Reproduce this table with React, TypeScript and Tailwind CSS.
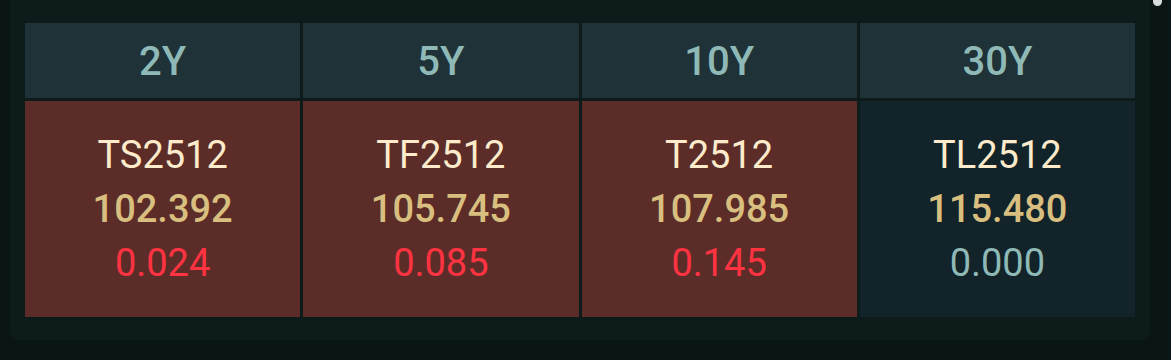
const TENORS = ["2Y", "5Y", "10Y", "30Y"];

type Quote = {
  symbol: string;
  price: string;
  change: number;
};

const QUOTES: Quote[] = [
  { symbol: "TS2512", price: "102.392", change: 0.024 },
  { symbol: "TF2512", price: "105.745", change: 0.085 },
  { symbol: "T2512", price: "107.985", change: 0.145 },
  { symbol: "TL2512", price: "115.480", change: 0.0 },
];

export default function App() {
  return (
    <div
      className="relative h-[360px] w-full overflow-hidden bg-[#0a1515]"
      style={{ fontFamily: "Roboto, 'Noto Sans', sans-serif" }}
    >
      {/* Card */}
      <div className="ml-[10px] w-[1140px] rounded-b-[10px] bg-[#0e1b1b] pt-[23px] pb-[23px] pl-[15px] pr-[15px]">
        {/* Header row */}
        <div className="grid grid-cols-4 gap-[3px]">
          {TENORS.map((t) => (
            <div
              key={t}
              className="flex h-[75px] items-center justify-center bg-[#1e3237] pt-[2px] text-[40px] font-medium text-[#8fb9b6]"
            >
              {t}
            </div>
          ))}
        </div>

        {/* Quote row */}
        <div className="mt-[3px] grid grid-cols-4 gap-[3px]">
          {QUOTES.map((q) => {
            const up = q.change > 0;
            return (
              <div
                key={q.symbol}
                className={`flex h-[216px] flex-col items-center justify-center text-[38px] leading-[54px] ${
                  up ? "bg-[#5c2d28]" : "bg-[#12232a]"
                }`}
              >
                <div className="text-[#fdebcc]">{q.symbol}</div>
                <div className="font-medium text-[#d9bf7f]">{q.price}</div>
                <div className={up ? "text-[#ff3341]" : "text-[#8fb9b6]"}>
                  {q.change.toFixed(3)}
                </div>
              </div>
            );
          })}
        </div>
      </div>

      {/* Scrollbar thumb */}
      <div className="absolute right-[9px] top-[-6px] h-[12px] w-[9px] rounded-full bg-[#d7dcdc]" />
    </div>
  );
}
